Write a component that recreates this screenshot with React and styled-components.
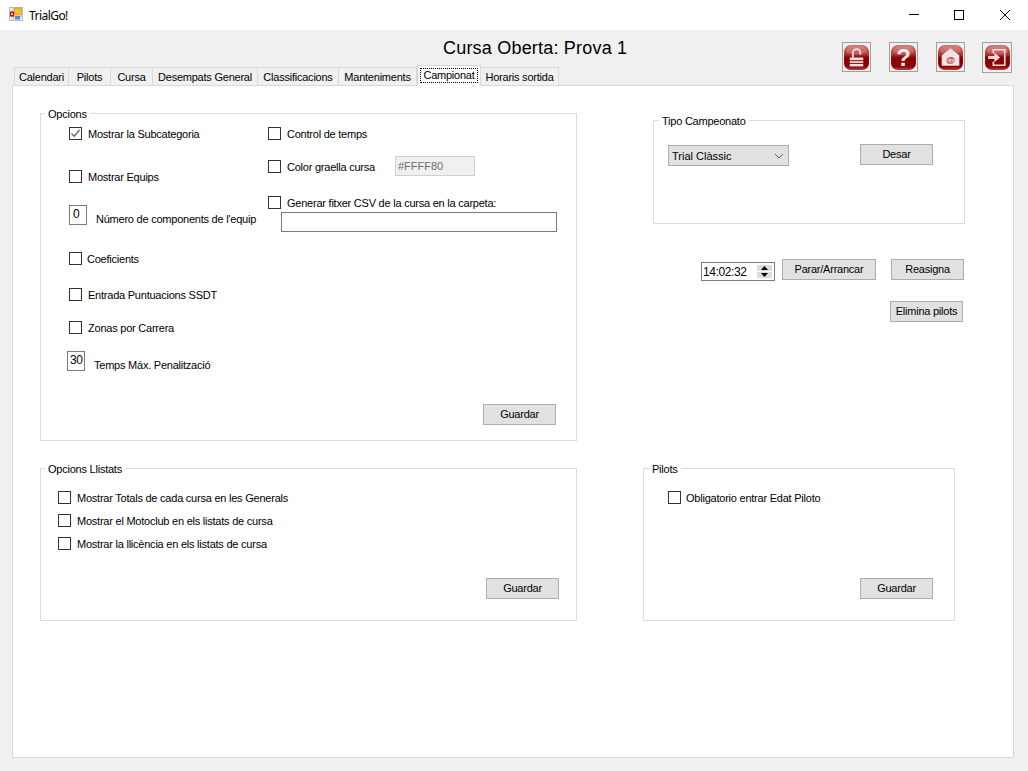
import React from 'react';
import styled, { createGlobalStyle } from 'styled-components';

const Global = createGlobalStyle`
  html, body { margin: 0; padding: 0; background: #f0f0f0; }
  body { font-family: "Liberation Sans", Arial, sans-serif; font-size: 11px; letter-spacing: -0.23px; color: #000; }
`;

const Window = styled.div`
  width: 1028px; height: 771px; display: flex; flex-direction: column; overflow: hidden; background: #f0f0f0;
`;
const TitleBar = styled.div`
  height: 30px; flex: none; background: #fff; display: flex; align-items: center; padding-left: 9px;
`;
const AppIcon = styled.svg`
  margin-bottom: 2px; flex: none;
`;
const AppName = styled.span`
  margin-left: 6px; font: 12px "Noto Sans", "Open Sans", sans-serif; letter-spacing: -0.55px; color: #000; flex: 1;
`;
const WinButton = styled.div`
  width: ${p => p.$w || 46}px; height: 30px; display: flex; align-items: center; justify-content: center;
`;
const Body = styled.div`
  flex: 1; display: flex; flex-direction: column; padding: 0 14px 13px 12px; min-height: 0;
`;
const Top = styled.div`
  height: 55px; flex: none; display: flex; justify-content: space-between; padding-left: 2px;
`;
const TopLeft = styled.div`
  display: flex; flex-direction: column; justify-content: space-between;
`;
const Heading = styled.h1`
  margin: 8px 0 0 429px; font: 400 18px/21px "Liberation Sans", Arial, sans-serif; letter-spacing: 0.2px; color: #000; white-space: nowrap;
`;
const TabStrip = styled.div`
  display: flex; align-items: flex-end; height: 20px; position: relative; z-index: 1;
`;
const Tab = styled.div`
  width: ${p => p.$w}px; box-sizing: border-box; height: ${p => (p.$active ? 21 : 18)}px;
  border: 1px solid #d9d9d9; border-left-width: ${p => (p.$active ? 1 : 0)}px;
  border-bottom: ${p => (p.$active ? '1px solid #fff' : '0')};
  background: ${p => (p.$active ? '#fff' : '#f0f0f0')};
  margin-bottom: ${p => (p.$active ? -1 : 0)}px;
  &:first-child { border-left-width: 1px; }
  display: flex; align-items: center; justify-content: center; white-space: nowrap;
  padding: ${p => (p.$active ? '2px' : '0')};
`;
const TabFocus = styled.span`
  flex: 1; align-self: stretch; display: flex; align-items: center; justify-content: center; outline: 1px dotted #000; outline-offset: -1px;
  padding-bottom: 2px;
`;
const IconBar = styled.div`
  display: flex; padding: 12px 2px 0 0;
`;
const IconButton = styled.div`
  width: ${p => p.$w || 29}px; height: ${p => p.$h || 30}px; margin-left: ${p => p.$ml || 0}px; box-sizing: border-box;
  border: 1px solid #a0a0a0; display: flex; align-items: center; justify-content: center; background: #f0f0f0;
`;
const TabPage = styled.div`
  flex: 1; background: #fff; border: 1px solid #d9d9d9; display: flex; padding: 27px 0 0 27px; min-height: 0;
`;
const LeftColumn = styled.div`
  width: 537px; flex: none; display: flex; flex-direction: column;
`;
const RightColumn = styled.div`
  margin-left: 66px; width: 322px; flex: none; display: flex; flex-direction: column;
`;
const Group = styled.section`
  position: relative; box-sizing: border-box; display: flex; flex-direction: column;
  width: ${p => p.$w}px; height: ${p => p.$h}px; border: 1px solid #dcdcdc;
  margin: ${p => p.$mt || 0}px 0 0 ${p => p.$ml || 0}px;
`;
const Legend = styled.span`
  position: absolute; top: -6px; left: ${p => p.$left ?? 5}px; background: #fff; padding: 0 3px; line-height: 13px;
`;
const Columns = styled.div`
  display: flex; flex: 1; padding-top: 13px;
`;
const OptionColumn = styled.div`
  display: flex; flex-direction: column; width: ${p => p.$w}px; margin-left: ${p => p.$ml || 0}px;
`;
const Row = styled.div`
  display: flex; align-items: center; white-space: nowrap;
  height: ${p => p.$h || 13}px; margin-top: ${p => p.$mt || 0}px; margin-left: ${p => p.$ml || 0}px;
`;
const Box = styled.span`
  width: 13px; height: 13px; box-sizing: border-box; border: 1px solid #333; background: #fff; flex: none;
  display: flex; align-items: center; justify-content: center;
`;
const Label = styled.span`
  margin-left: ${p => p.$ml ?? 5}px; padding-top: ${p => p.$pt || 0}px; width: ${p => (p.$w ? `${p.$w}px` : 'auto')};
`;
const NumberBox = styled.span`
  width: ${p => p.$w}px; height: 20px; box-sizing: border-box; border: 1px solid #7a7a7a; background: #fff;
  display: flex; align-items: flex-start; padding: 1px 0 0 ${p => p.$pl}px; font-size: 12px; letter-spacing: -0.4px; flex: none;
`;
const ColorField = styled.span`
  width: 80px; height: 20px; box-sizing: border-box; border: 1px solid #d0d0d0; background: #f0f0f0; color: #6d6d6d;
  display: flex; align-items: center; padding-left: 2px; letter-spacing: 0;
`;
const TextField = styled.div`
  box-sizing: border-box; width: 276px; height: 20px; border: 1px solid #7a7a7a; background: #fff; margin: 3px 0 0 13px;
`;
const Footer = styled.div`
  display: flex; justify-content: flex-end; padding: 0 ${p => p.$pr}px ${p => p.$pb}px 0;
`;
const Button = styled.div`
  width: ${p => p.$w || 73}px; height: 21px; box-sizing: border-box; border: 1px solid #adadad; background: #e1e1e1;
  display: flex; align-items: center; justify-content: center; white-space: nowrap; flex: none;
  margin-left: ${p => p.$ml || 0}px; padding-bottom: 1px;
`;
const TipoBody = styled.div`
  display: flex; justify-content: space-between; align-items: flex-start; padding: 23px 31px 0 14px;
`;
const Select = styled.div`
  width: 121px; height: 21px; box-sizing: border-box; border: 1px solid #adadad; background: #e1e1e1; margin-top: 1px;
  display: flex; align-items: center; justify-content: space-between; padding: 0 4px 0 3px; letter-spacing: 0;
`;
const TimeRow = styled.div`
  display: flex; align-items: flex-start; margin-top: 35px; padding-left: 58px;
`;
const TimeField = styled.div`
  width: 74px; height: 19px; box-sizing: border-box; border: 1px solid #7a7a7a; margin-top: 3px; background: #fff;
  display: flex; align-items: center; justify-content: space-between; padding: 0 2px 0 1px; font-size: 12px; letter-spacing: -0.4px;
`;
const Spinner = styled.div`
  width: 15px; height: 13px; display: flex; flex-direction: column; gap: 1px;
`;
const SpinPart = styled.div`
  flex: 1; background: #dcdcdc; display: flex; align-items: center; justify-content: center;
`;
const EliminaRow = styled.div`
  display: flex; margin: 20px 0 0 247px;
`;
const ListRows = styled.div`
  display: flex; flex-direction: column; gap: 10px; flex: 1; padding: 22px 0 0 ${p => p.$pl}px;
`;

const Check = ({ checked }) => (
  <Box>
    {checked && (
      <svg width="11" height="11" viewBox="0 0 11 11">
        <path d="M1.5 5.5 L4.2 8.2 L9.5 2" fill="none" stroke="#666" strokeWidth="1.4" />
      </svg>
    )}
  </Box>
);

const Option = ({ label, checked, mt, ml }) => (
  <Row $mt={mt}>
    <Check checked={checked} />
    <Label $ml={ml}>{label}</Label>
  </Row>
);

const RedTile = ({ id, children }) => (
  <svg width="27" height="27" viewBox="0 0 26 26">
    <defs>
      <linearGradient id={id} x1="0" y1="0" x2="0" y2="1">
        <stop offset="0" stopColor="#cf7878" />
        <stop offset="0.4" stopColor="#b02a2a" />
        <stop offset="0.5" stopColor="#8e0000" />
        <stop offset="0.85" stopColor="#8a0000" />
        <stop offset="1" stopColor="#b24040" />
      </linearGradient>
    </defs>
    <rect x="1" y="1" width="24" height="24" rx="6.5" fill={`url(#${id})`} />
    <path d="M3 8 Q3 2.5 8 2.5 H18 Q23 2.5 23 8 Q13 13 3 8 Z" fill="#fff" opacity="0.18" />
    {children}
  </svg>
);

const tabs = [
  ['Calendari', 55], ['Pilots', 42], ['Cursa', 42], ['Desempats General', 105],
  ['Classificacions', 81], ['Manteniments', 78], ['Campionat', 64], ['Horaris sortida', 78],
];

export default function App() {
  return (
    <Window>
      <Global />
      <TitleBar>
        <AppIcon width="14" height="14" viewBox="0 0 14 14">
          <rect x="0.5" y="0.5" width="13" height="13" fill="#e8e8e8" stroke="#bdbdbd" />
          <path d="M4.5 0V14M0 9.5H14" stroke="#c4c4c4" />
          <rect x="1" y="4.5" width="4" height="5" fill="#b01010" />
          <rect x="2" y="6" width="2" height="2" fill="#f0c0a0" />
          <rect x="5.5" y="1" width="7" height="7" fill="#f2c02c" stroke="#b89030" strokeWidth="0.6" />
          <rect x="6" y="9" width="5" height="3.5" fill="#4f8fe0" />
        </AppIcon>
        <AppName>TrialGo!</AppName>
        <WinButton $w={44}>
          <svg width="10" height="10" viewBox="0 0 10 10"><path d="M0 4.5H10" stroke="#000" /></svg>
        </WinButton>
        <WinButton>
          <svg width="10" height="10" viewBox="0 0 10 10"><rect x="0.5" y="0.5" width="9" height="9" fill="none" stroke="#000" /></svg>
        </WinButton>
        <WinButton>
          <svg width="10" height="10" viewBox="0 0 10 10"><path d="M0 0L10 10M10 0L0 10" stroke="#000" strokeWidth="1" /></svg>
        </WinButton>
      </TitleBar>
      <Body>
        <Top>
          <TopLeft>
            <Heading>Cursa Oberta: Prova 1</Heading>
            <TabStrip>
              {tabs.map(([t, w]) =>
                t === 'Campionat' ? (
                  <Tab key={t} $w={w} $active><TabFocus>{t}</TabFocus></Tab>
                ) : (
                  <Tab key={t} $w={w}>{t}</Tab>
                )
              )}
            </TabStrip>
          </TopLeft>
          <IconBar>
            <IconButton>
              <RedTile id="g1">
                <path d="M9.5 13 V8.5 A3.6 3.6 0 0 1 16.7 8.5 V10" fill="none" stroke="#f2dcdc" strokeWidth="1.8" />
                <rect x="6.5" y="13" width="13" height="2.6" fill="#f5e4e4" />
                <rect x="6.5" y="16.4" width="13" height="2" fill="#e4c0c0" />
                <rect x="6.5" y="19.2" width="13" height="2.4" fill="#f5e4e4" />
              </RedTile>
            </IconButton>
            <IconButton $ml={18}>
              <RedTile id="g2">
                <text x="13" y="21" textAnchor="middle" fontFamily="Liberation Sans" fontWeight="700" fontSize="23" letterSpacing="0" fill="#fbeeee">?</text>
              </RedTile>
            </IconButton>
            <IconButton $ml={18}>
              <RedTile id="g3">
                <path d="M4.5 11 L13 4 L21.5 11 V21 H4.5 Z" fill="#f2e4e4" />
                <text x="13" y="18" textAnchor="middle" fontFamily="Liberation Sans" fontWeight="700" fontSize="9" letterSpacing="0" fill="#b02a2a">@</text>
              </RedTile>
            </IconButton>
            <IconButton $ml={17} $w={30} $h={31}>
              <RedTile id="g4">
                <path d="M9 9 V5.5 H20 V20.5 H9 V17" fill="none" stroke="#f2dcdc" strokeWidth="1.6" />
                <path d="M4 11.5 H10 V8.5 L15.5 13 L10 17.5 V14.5 H4 Z" fill="#f2dcdc" />
              </RedTile>
            </IconButton>
          </IconBar>
        </Top>
        <TabPage>
          <LeftColumn>
            <Group $w={537} $h={328}>
              <Legend $left={4}>Opcions</Legend>
              <Columns>
                <OptionColumn $w={199} $ml={28}>
                  <Option label="Mostrar la Subcategoria" checked ml={6} />
                  <Option label="Mostrar Equips" mt={30} ml={6} />
                  <Row $h={20} $mt={22}>
                    <NumberBox $w={18} $pl={3}>0</NumberBox>
                    <Label $ml={9} $pt={8}>Número de components de l'equip</Label>
                  </Row>
                  <Option label="Coeficients" mt={27} />
                  <Option label="Entrada Puntuacions SSDT" mt={23} ml={6} />
                  <Option label="Zonas por Carrera" mt={20} ml={6} />
                  <Row $h={20} $mt={17} $ml={-2}>
                    <NumberBox $w={18} $pl={2}>30</NumberBox>
                    <Label $ml={9} $pt={8}>Temps Máx. Penalització</Label>
                  </Row>
                </OptionColumn>
                <OptionColumn $w={289}>
                  <Option label="Control de temps" ml={6} />
                  <Row $h={20} $mt={16}>
                    <Check />
                    <Label $ml={6} $w={108} $pt={1}>Color graella cursa</Label>
                    <ColorField>#FFFF80</ColorField>
                  </Row>
                  <Option label="Generar fitxer CSV de la cursa en la carpeta:" mt={20} ml={6} />
                  <TextField />
                </OptionColumn>
              </Columns>
              <Footer $pr={20} $pb={15}><Button>Guardar</Button></Footer>
            </Group>
            <Group $w={537} $h={153} $mt={27}>
              <Legend $left={4}>Opcions Llistats</Legend>
              <ListRows $pl={17}>
                <Option label="Mostrar Totals de cada cursa en les Generals" ml={6} />
                <Option label="Mostrar el Motoclub en els listats de cursa" ml={6} />
                <Option label="Mostrar la llicència en els listats de cursa" ml={6} />
              </ListRows>
              <Footer $pr={17} $pb={21}><Button>Guardar</Button></Footer>
            </Group>
          </LeftColumn>
          <RightColumn>
            <Group $w={312} $h={104} $mt={7} $ml={10}>
              <Legend>Tipo Campeonato</Legend>
              <TipoBody>
                <Select>
                  Trial Clàssic
                  <svg width="10" height="6" viewBox="0 0 10 6"><path d="M1 1L5 5L9 1" fill="none" stroke="#606060" /></svg>
                </Select>
                <Button>Desar</Button>
              </TipoBody>
            </Group>
            <TimeRow>
              <TimeField>
                14:02:32
                <Spinner>
                  <SpinPart><svg width="7" height="4" viewBox="0 0 7 4"><path d="M3.5 0L7 4H0Z" fill="#000" /></svg></SpinPart>
                  <SpinPart><svg width="7" height="4" viewBox="0 0 7 4"><path d="M0 0H7L3.5 4Z" fill="#000" /></svg></SpinPart>
                </Spinner>
              </TimeField>
              <Button $w={94} $ml={7}>Parar/Arrancar</Button>
              <Button $ml={15}>Reasigna</Button>
            </TimeRow>
            <EliminaRow><Button>Elimina pilots</Button></EliminaRow>
            <Group $w={312} $h={153} $mt={146}>
              <Legend>Pilots</Legend>
              <ListRows $pl={24}>
                <Option label="Obligatorio entrar Edat Piloto" ml={5} />
              </ListRows>
              <Footer $pr={21} $pb={21}><Button>Guardar</Button></Footer>
            </Group>
          </RightColumn>
        </TabPage>
      </Body>
    </Window>
  );
}
